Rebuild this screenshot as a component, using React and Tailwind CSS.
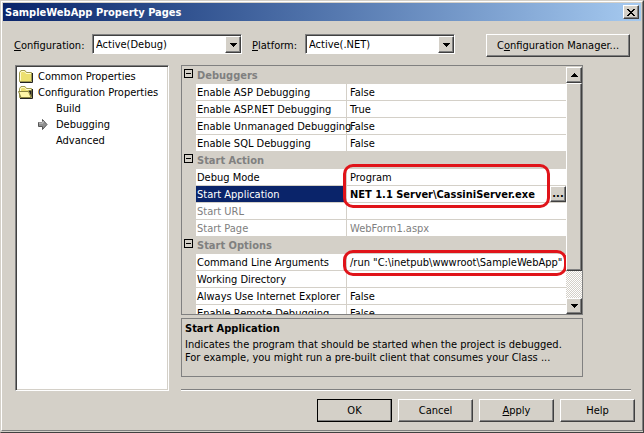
import { useState } from 'react';

const CATEGORIES = [
  {
    name: 'Debuggers',
    rows: [
      { name: 'Enable ASP Debugging', value: 'False' },
      { name: 'Enable ASP.NET Debugging', value: 'True' },
      { name: 'Enable Unmanaged Debugging', value: 'False' },
      { name: 'Enable SQL Debugging', value: 'False' },
    ],
  },
  {
    name: 'Start Action',
    rows: [
      { name: 'Debug Mode', value: 'Program', mark: 'tall' },
      { name: 'Start Application', value: 'NET 1.1 Server\\CassiniServer.exe', browse: true },
      { name: 'Start URL', value: '', disabled: true },
      { name: 'Start Page', value: 'WebForm1.aspx', disabled: true },
    ],
  },
  {
    name: 'Start Options',
    rows: [
      { name: 'Command Line Arguments', value: '/run "C:\\inetpub\\wwwroot\\SampleWebApp"', mark: 'short' },
      { name: 'Working Directory', value: '' },
      { name: 'Always Use Internet Explorer', value: 'False' },
      { name: 'Enable Remote Debugging', value: 'False' },
    ],
  },
];

const RAISED =
  'border border-t-white border-l-white border-r-[#404040] border-b-[#404040] bg-[#d4d0c8] shadow-[inset_-1px_-1px_0_#808080]';

function Arrow({ up }) {
  return (
    <svg className="block" width="7" height="4" viewBox="0 0 7 4" shapeRendering="crispEdges" aria-hidden="true">
      <path d={up ? 'M3 0h1v1h1v1h1v1h1v1H0V3h1V2h1V1h1z' : 'M0 0h7v1H6v1H5v1H4v1H3V3H2V2H1V1H0z'} fill="#000" />
    </svg>
  );
}

function Dropdown({ id, options }) {
  return (
    <div className="relative h-5 w-[150px] border border-t-[#808080] border-l-[#808080] border-r-white border-b-white bg-white shadow-[inset_1px_1px_0_#404040]">
      <select id={id} className="block h-full w-full appearance-none bg-transparent pl-[3px] outline-none">
        {options.map((option) => (
          <option key={option}>{option}</option>
        ))}
      </select>
      <span className={`pointer-events-none absolute top-px right-0 bottom-0 flex w-4 items-center justify-center ${RAISED}`}>
        <Arrow />
      </span>
    </div>
  );
}

function DialogButton({ children, isDefault, className = 'w-[75px]' }) {
  return (
    <button
      type="button"
      className={`h-[23px] text-center ${className} ${RAISED} ${isDefault ? 'outline -outline-offset-1 outline-black' : ''}`}
    >
      {children}
    </button>
  );
}

function FolderIcon({ open }) {
  return (
    <svg className="block shrink-0" width="16" height="14" viewBox="0 0 16 14" aria-hidden="true">
      <path d="M2 13.5h12.5V4" fill="none" stroke="#222" />
      <path d="M1.5 12.5V3.5l1.500-2h4l1.500 2h5v9z" fill="#ece070" stroke="#a09a50" />
      <path d="M2.500 11.500V4l1-1.500h3l1.500 2h5" fill="none" stroke="#fffbd0" />
      {open ? (
        <>
          <path d="M10.500 5.500l3 6.500V5.500z" fill="#222" />
          <path d="M.5 6.500h10l2.500 6H3z" fill="#fff6a8" stroke="#8a8440" />
        </>
      ) : null}
    </svg>
  );
}

function CurrentPageIcon() {
  return (
    <svg className="block" width="10" height="11" viewBox="0 0 10 11" aria-hidden="true">
      <path d="M.5 3.500h4v-3l4.500 5-4.500 5v-3h-4z" fill="#909090" stroke="#555" />
      <path d="M1 4h4V2" fill="none" stroke="#d0d0d0" />
    </svg>
  );
}

function PageTree() {
  const [page, setPage] = useState('Debugging');

  return (
    <nav className="w-[154px] shrink-0 border border-t-[#808080] border-l-[#808080] border-r-white border-b-white bg-white pt-0.5 pl-0.5 shadow-[inset_1px_1px_0_#404040,inset_-1px_-1px_0_#d4d0c8]">
      <ul>
        <li className="flex h-4 items-center gap-1">
          <FolderIcon />
          <span>Common Properties</span>
        </li>
        <li>
          <div className="flex h-4 items-center gap-1">
            <FolderIcon open />
            <span className="whitespace-nowrap">Configuration Properties</span>
          </div>
          <ul>
            {['Build', 'Debugging', 'Advanced'].map((name) => (
              <li key={name}>
                <button type="button" className="flex h-4 w-full items-center" onClick={() => setPage(name)}>
                  <span className="flex w-[38px] justify-end pr-2">{page === name ? <CurrentPageIcon /> : null}</span>
                  {name}
                </button>
              </li>
            ))}
          </ul>
        </li>
      </ul>
    </nav>
  );
}

function Mark({ kind }) {
  return (
    <span
      className={`pointer-events-none absolute -left-1 z-10 rounded-[10px] border-3 border-[#e0141a] ${
        kind === 'tall' ? '-top-[5px] h-[44px] w-[207px]' : '-top-[4px] h-[26px] w-[224px]'
      }`}
    />
  );
}

function PropertyRow({ row, selected, onSelect }) {
  return (
    <tr className={`h-[17px] bg-white ${row.disabled ? 'text-[#808080]' : ''}`} onClick={onSelect}>
      <td className="bg-[#d4d0c8]" />
      <th
        scope="row"
        className={`border-r border-b border-[#d4d0c8] pl-px text-left font-normal whitespace-nowrap ${
          selected ? 'bg-[#0a246a] text-white' : ''
        }`}
      >
        {row.name}
      </th>
      <td className="relative border-b border-[#d4d0c8] pl-[3px] whitespace-nowrap">
        {row.mark ? <Mark kind={row.mark} /> : null}
        {row.browse ? (
          <div className="flex h-4">
            <input
              className="h-4 min-w-0 flex-1 font-bold outline-none"
              aria-label={row.name}
              defaultValue={row.value}
            />
            <button type="button" aria-label="Browse" className={`h-4 w-4 text-center leading-[12px] font-bold ${RAISED}`}>
              ...
            </button>
          </div>
        ) : (
          row.value
        )}
      </td>
    </tr>
  );
}

function PropertyGrid({ selected, onSelect }) {
  const [closed, setClosed] = useState([]);

  const toggle = (name) => {
    setClosed((previous) => (previous.includes(name) ? previous.filter((item) => item !== name) : [...previous, name]));
  };

  return (
    <div className="flex h-[250px] border border-[#808080] pt-px">
      <div className="min-w-0 flex-1 overflow-hidden">
        <table className="w-full table-fixed border-separate border-spacing-0">
          <colgroup>
            <col className="w-[14px]" />
            <col className="w-[151px]" />
            <col />
          </colgroup>
          {CATEGORIES.map((category) => (
            <tbody key={category.name}>
              <tr className="h-[17px]">
                <td>
                  <button
                    type="button"
                    aria-label={`Toggle ${category.name}`}
                    className="mb-1 ml-0.5 flex size-[9px] items-center justify-center border border-black"
                    onClick={() => toggle(category.name)}
                  >
                    <span className="h-px w-[5px] bg-black" />
                  </button>
                </td>
                <th scope="rowgroup" colSpan="2" className="pl-px text-left font-bold text-[#808080]">
                  {category.name}
                </th>
              </tr>
              {closed.includes(category.name)
                ? null
                : category.rows.map((row) => (
                    <PropertyRow
                      key={row.name}
                      row={row}
                      selected={selected === row.name}
                      onSelect={() => onSelect(row.name)}
                    />
                  ))}
            </tbody>
          ))}
        </table>
      </div>
      <div className="flex w-4 shrink-0 flex-col bg-[repeating-conic-gradient(#fff_0_25%,#d4d0c8_0_50%)] bg-size-[2px_2px]">
        <button type="button" aria-label="Scroll up" className={`flex h-4 items-center justify-center ${RAISED}`}>
          <Arrow up />
        </button>
        <div className={`h-[188px] ${RAISED}`} />
        <button type="button" aria-label="Scroll down" className={`mt-auto flex h-4 items-center justify-center ${RAISED}`}>
          <Arrow />
        </button>
      </div>
    </div>
  );
}

export default function App() {
  const [selected, setSelected] = useState('Start Application');

  return (
    <div className="min-h-screen border border-t-[#d4d0c8] border-l-[#d4d0c8] border-r-[#404040] border-b-[#404040] bg-[#d4d0c8] font-['DejaVu_Sans_Condensed','DejaVu_Sans',sans-serif] text-[11px] leading-[13px] text-black">
      <div className="border border-t-white border-l-white border-r-[#808080] border-b-[#808080] p-px">
        <header className="flex h-[18px] items-center justify-between bg-linear-to-r from-[#0a246a] to-[#a6caf0] pr-0.5 pl-0.5">
          <h1 className="font-bold text-white">SampleWebApp Property Pages</h1>
          <button type="button" aria-label="Close" className={`flex h-[14px] w-4 items-center justify-center ${RAISED}`}>
            <svg width="8" height="7" viewBox="0 0 8 7" shapeRendering="crispEdges" aria-hidden="true">
              <path d="M0 0h2v1h1v1h2V1h1V0h2v1H7v1H6v1H5v1h1v1h1v1h1v1H6V6H5V5H3v1H2v1H0V6h1V5h1V4h1V3H2V2H1V1H0z" fill="#000" />
            </svg>
          </button>
        </header>

        <div className="pt-[13px] pr-[10px] pl-3">
          <div className="flex items-start pr-px">
            <label htmlFor="configuration" className="-ml-px w-[78px] pt-[5px]">
              <u>C</u>onfiguration:
            </label>
            <Dropdown id="configuration" options={['Active(Debug)', 'Release', 'All Configurations']} />
            <label htmlFor="platform" className="ml-[10px] w-[53px] pt-[5px]">
              <u>P</u>latform:
            </label>
            <Dropdown id="platform" options={['Active(.NET)']} />
            <div className="ml-auto">
              <DialogButton className="w-36">
                C<u>o</u>nfiguration Manager...
              </DialogButton>
            </div>
          </div>

          <div className="mt-2 flex gap-3">
            <PageTree />
            <div className="min-w-0 flex-1">
              <div className="mr-12">
                <PropertyGrid selected={selected} onSelect={setSelected} />
                <section className="mt-[3px] h-[59px] border border-[#808080] px-[3px] pt-[3px]">
                  <h2 className="font-bold">{selected}</h2>
                  <p className="mt-[3px]">
                    Indicates the program that should be started when the project is debugged.
                    <br />
                    For example, you might run a pre-built client that consumes your Class ...
                  </p>
                </section>
              </div>
              <hr className="mt-3 h-0.5 border-t border-b border-t-[#808080] border-b-white" />
            </div>
          </div>
        </div>

        <footer className="flex justify-end gap-1.5 pt-2 pr-1.5 pb-[7px]">
          <DialogButton isDefault>OK</DialogButton>
          <DialogButton>Cancel</DialogButton>
          <DialogButton>
            <u>A</u>pply
          </DialogButton>
          <DialogButton>Help</DialogButton>
        </footer>
      </div>
    </div>
  );
}
